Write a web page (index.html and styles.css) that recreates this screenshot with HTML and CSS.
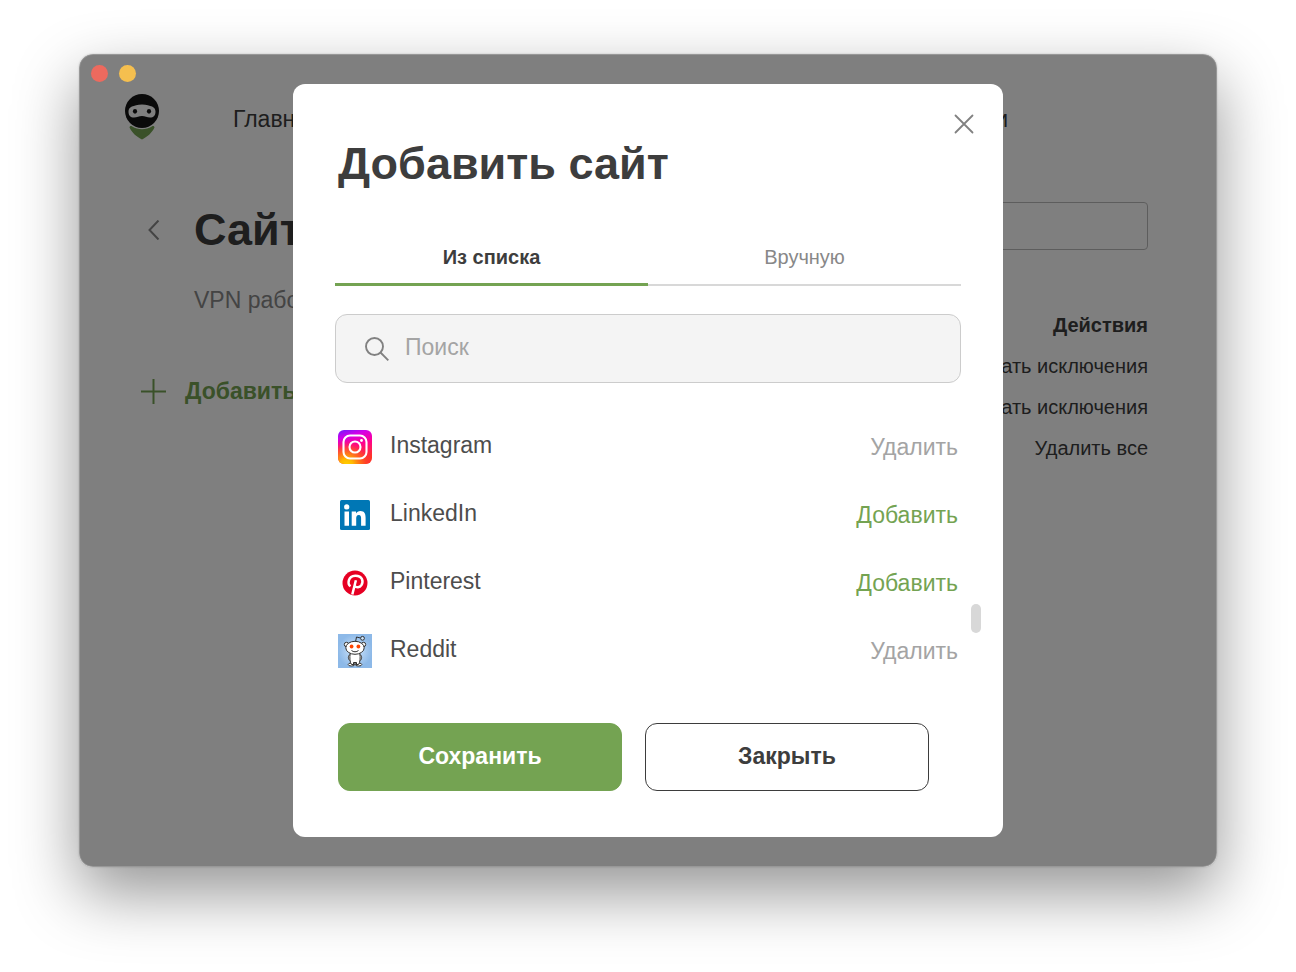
FILE: index.html
```html
<!DOCTYPE html>
<html lang="ru">
<head>
<meta charset="utf-8">
<meta name="viewport" content="width=device-width, initial-scale=1">
<title>Добавить сайт</title>
<link rel="stylesheet" href="styles.css">
</head>
<body>
<div class="window">
  <div class="app">
    <header class="topbar">
      <svg class="logo" viewBox="0 0 34 46" aria-hidden="true">
        <circle cx="17" cy="17" r="17" fill="#141414"/>
        <path d="M3.500 17.500C3.500 13 8 11.300 17 10.500C26 11.300 30.500 13 30.500 17.500C30.500 21.500 28.500 23.500 25 23.500C22 23.500 20 22 17 22S12 23.500 9 23.500C5.500 23.500 3.500 21.500 3.500 17.500Z" fill="#fff"/>
        <ellipse cx="10" cy="17.300" rx="2.100" ry="2.400" fill="#141414"/>
        <ellipse cx="24" cy="17.300" rx="2.100" ry="2.400" fill="#141414"/>
        <path d="M4.500 33.500C4.800 32 6 31.700 7.200 32.500C13 36 21 36 26.800 32.500C28 31.700 29.200 32 29.500 33.500C27 39 22 43 17 45.500C12 43 7 39 4.500 33.500Z" fill="#74a352"/>
      </svg>
      <nav class="nav">
        <a href="#home">Главная</a>
        <a href="#settings">Настройки</a>
      </nav>
    </header>
    <main class="page">
      <div class="page-head">
        <button class="back" type="button" aria-label="Назад">
          <svg width="12" height="20" viewBox="0 0 12 20"><path d="M10.500 0.500L1.500 10L10.500 19.500" fill="none" stroke="#888" stroke-width="2"/></svg>
        </button>
        <h1>Сайты</h1>
        <input class="page-search" type="text" aria-label="Поиск по сайтам">
      </div>
      <p class="page-note">VPN работает</p>
      <div class="page-body">
        <button class="add" type="button">
          <svg width="25" height="25" viewBox="0 0 25 25"><path d="M12.500 0V25M0 12.500H25" stroke="#74a352" stroke-width="2"/></svg>
          Добавить сайт
        </button>
        <section class="actions">
          <h2>Действия</h2>
          <button type="button">Импортировать исключения</button>
          <button type="button">Экспортировать исключения</button>
          <button type="button">Удалить все</button>
        </section>
      </div>
    </main>
  </div>
  <div class="overlay">
    <section class="modal" role="dialog" aria-modal="true" aria-labelledby="dialog-title">
      <header class="modal-head">
        <h2 id="dialog-title">Добавить сайт</h2>
        <button class="close" type="button" aria-label="Закрыть окно">
          <svg width="20" height="20" viewBox="0 0 20 20"><path d="M1.500 1.500L18.500 18.500M18.500 1.500L1.500 18.500" stroke="#818181" stroke-width="1.800" stroke-linecap="round"/></svg>
        </button>
      </header>
      <div class="tabs" role="tablist">
        <button class="tab tab-active" type="button" role="tab" aria-selected="true">Из списка</button>
        <button class="tab" type="button" role="tab" aria-selected="false">Вручную</button>
      </div>
      <label class="search">
        <svg width="24" height="24" viewBox="0 0 24 24"><circle cx="9.500" cy="9.500" r="8.500" fill="none" stroke="#818181" stroke-width="1.900"/><path d="M15.500 15.500L23.300 23.300" stroke="#818181" stroke-width="1.900"/></svg>
        <input type="text" placeholder="Поиск" aria-label="Поиск">
      </label>
      <div class="list-wrap">
        <ul class="list">
          <li class="row">
            <svg class="site-icon" viewBox="0 0 34 34">
              <defs>
                <linearGradient id="ig-base" x1="0" y1="0" x2="0.300" y2="1"><stop offset="0" stop-color="#6b1cff"/><stop offset="0.250" stop-color="#d400e8"/><stop offset="0.550" stop-color="#ff0090"/><stop offset="1" stop-color="#ff3a20"/></linearGradient>
                <radialGradient id="ig-warm" cx="0.250" cy="1.050" r="0.800"><stop offset="0" stop-color="#ffd600"/><stop offset="0.250" stop-color="#ffb800"/><stop offset="0.650" stop-color="#ff5a20" stop-opacity="0.700"/><stop offset="1" stop-color="#ff0069" stop-opacity="0"/></radialGradient>
              </defs>
              <rect width="34" height="34" rx="6" fill="url(#ig-base)"/>
              <rect width="34" height="34" rx="6" fill="url(#ig-warm)"/>
              <rect x="5.500" y="5.500" width="23" height="23" rx="6.500" fill="none" stroke="#fff" stroke-width="2.100"/>
              <circle cx="17" cy="17" r="5.500" fill="none" stroke="#fff" stroke-width="2.100"/>
              <circle cx="23.500" cy="10.500" r="1.400" fill="#fff"/>
            </svg>
            <span class="site-name">Instagram</span>
            <button class="row-action muted" type="button">Удалить</button>
          </li>
          <li class="row">
            <svg class="site-icon" viewBox="0 0 34 34">
              <rect x="2" y="2" width="30" height="30" rx="1.500" fill="#0077b5"/>
              <circle cx="8.700" cy="8.900" r="2.600" fill="#fff"/>
              <path d="M6.500 13.400H11V27.700H6.500ZM13.700 13.400H18V15.400C18.800 14 20.400 13 22.400 13C26.500 13 27.600 15.800 27.600 19.700V27.700H23.100V20.700C23.100 18.800 22.900 17 20.800 17S18.200 18.700 18.200 20.600V27.700H13.700Z" fill="#fff"/>
            </svg>
            <span class="site-name">LinkedIn</span>
            <button class="row-action" type="button">Добавить</button>
          </li>
          <li class="row">
            <svg class="site-icon" viewBox="0 0 34 34">
              <circle cx="17" cy="17" r="12.500" fill="#e60023"/>
              <path d="M12.500 20.200C9.300 18.300 9.700 10.200 17.300 9.800C24.500 9.700 25.700 15.300 23.400 19.200C21.700 21.900 18.200 21.900 16.800 19.900M17.900 14.200L14.300 28.500" fill="none" stroke="#fff" stroke-width="2.500" stroke-linejoin="round"/>
            </svg>
            <span class="site-name">Pinterest</span>
            <button class="row-action" type="button">Добавить</button>
          </li>
          <li class="row">
            <svg class="site-icon" viewBox="0 0 34 34">
              <defs><radialGradient id="rd-bg"><stop offset="0" stop-color="#d0e5fa"/><stop offset="1" stop-color="#8db9e8"/></radialGradient></defs>
              <rect width="34" height="34" fill="url(#rd-bg)"/>
              <g fill="#fff" stroke="#303030" stroke-width="1">
                <path d="M17.500 8L18.500 3L22.500 4" fill="none"/>
                <circle cx="24.500" cy="4.300" r="1.900" fill="#d0e5fa"/>
                <circle cx="8.500" cy="10.500" r="2.200"/><circle cx="25.500" cy="10.500" r="2.200"/>
                <ellipse cx="13.500" cy="30.500" rx="3.300" ry="1.500"/><ellipse cx="20.500" cy="30.500" rx="3.300" ry="1.500"/>
                <path d="M12.500 20C9.500 22 9.800 25.500 12.500 27M21.500 20C24.500 22 24.200 25.500 21.500 27"/>
                <path d="M12.300 19H21.700C22.700 24 22 28.500 20.500 30.500H13.500C12 28.500 11.300 24 12.300 19Z"/>
                <path d="M15.500 30.500V28.500H18.500V30.500" fill="#777"/>
                <ellipse cx="17" cy="13.800" rx="9.200" ry="6.500"/>
                <path d="M13.500 16.500C15.500 18.200 18.500 18.200 20.500 16.500" fill="none"/>
              </g>
              <circle cx="13.600" cy="12.500" r="1.900" fill="#ff4500"/><circle cx="20.400" cy="12.500" r="1.900" fill="#ff4500"/>
            </svg>
            <span class="site-name">Reddit</span>
            <button class="row-action muted" type="button">Удалить</button>
          </li>
        </ul>
        <span class="thumb" aria-hidden="true"></span>
      </div>
      <footer class="modal-foot">
        <button class="btn btn-primary" type="button">Сохранить</button>
        <button class="btn" type="button">Закрыть</button>
      </footer>
    </section>
  </div>
  <div class="lights">
    <button class="light light-red" type="button" aria-label="Закрыть"></button>
    <button class="light light-yellow" type="button" aria-label="Свернуть"></button>
  </div>
</div>
</body>
</html>
```

FILE: styles.css
```css
* {
  box-sizing: border-box;
}

body {
  margin: 0;
  padding: 54px 79px 105px;
  background: #fff;
  color: #3d3d3d;
  font-family: "Liberation Sans", Arial, sans-serif;
  font-size: 23px;
  line-height: 28px;
}

h1, h2, p, ul {
  margin: 0;
  padding: 0;
}

button {
  padding: 0;
  border: 0;
  background: none;
  color: inherit;
  font: inherit;
  cursor: pointer;
}

a {
  color: inherit;
  text-decoration: none;
}

svg {
  display: block;
  flex: none;
}

.window {
  display: grid;
  grid-template-columns: minmax(0, 1fr);
  border-radius: 14px;
  background: #fff;
  overflow: hidden;
  box-shadow: 0 26px 64px rgba(0, 0, 0, 0.42), 0 0 2px rgba(0, 0, 0, 0.2);
}

.app, .overlay, .lights {
  grid-area: 1 / 1;
}

.app {
  padding: 40px 69px 40px 46px;
}

.topbar {
  display: flex;
  align-items: center;
  gap: 74px;
}

.logo {
  width: 34px;
  height: 46px;
}

.nav {
  display: flex;
  flex: 1;
  justify-content: space-between;
  margin-right: 140px;
  padding-top: 3px;
}

.page {
  padding-top: 62px;
}

.page-head {
  display: flex;
  align-items: flex-start;
}

.back {
  width: 46px;
  height: 56px;
  margin-left: 23px;
}

.page-head h1 {
  flex: 1;
  font-size: 45px;
  line-height: 56px;
}

.page-search {
  width: 300px;
  height: 48px;
  border: 1px solid #bbb;
  border-radius: 4px;
  background: #fff;
  font: inherit;
}

.page-note {
  margin: 28px 0 0 69px;
  color: #888;
}

.page-body {
  display: flex;
  justify-content: space-between;
  align-items: flex-start;
  margin: -9px 0 0 16px;
}

.add {
  display: flex;
  align-items: center;
  gap: 19px;
  margin-top: 72px;
  color: #74a352;
  font-weight: bold;
}

.actions {
  display: flex;
  flex-direction: column;
  align-items: flex-end;
  font-size: 20px;
  line-height: 41px;
}

.actions h2 {
  font-size: 20px;
}

.overlay {
  display: flex;
  justify-content: center;
  align-items: center;
  padding: 30px;
  border-radius: 14px;
  background: rgba(0, 0, 0, 0.5);
  box-shadow: inset 0 0 0 1px rgba(255, 255, 255, 0.2);
}

.modal {
  width: 100%;
  max-width: 710px;
  padding: 0 42px 46px;
  border-radius: 12px;
  background: #fff;
}

.modal-head {
  display: flex;
  justify-content: space-between;
  align-items: flex-start;
  padding-left: 3px;
}

.modal-head h2 {
  margin-top: 52px;
  font-size: 45px;
  line-height: 56px;
}

.close {
  display: grid;
  place-items: center;
  width: 40px;
  height: 40px;
  margin: 20px -23px 0 0;
}

.tabs {
  display: flex;
  margin-top: 38px;
}

.tab {
  flex: 1;
  height: 56px;
  border-bottom: 2px solid #d8d8d8;
  color: #888;
  font-size: 20px;
}

.tab-active {
  border-bottom: 3px solid #74a352;
  color: #3d3d3d;
  font-weight: bold;
}

.search {
  display: flex;
  align-items: center;
  gap: 16px;
  height: 69px;
  margin-top: 28px;
  padding: 0 29px;
  border: 1px solid #ccc;
  border-radius: 12px;
  background: #f4f4f4;
}

.search input {
  flex: 1;
  min-width: 0;
  padding: 0 0 4px;
  border: 0;
  outline: 0;
  background: none;
  color: inherit;
  font: inherit;
}

.search input::placeholder {
  color: #a4a4a4;
  opacity: 1;
}

.list-wrap {
  position: relative;
  margin-top: 30px;
}

.list {
  padding: 0 3px;
  list-style: none;
}

.row {
  display: flex;
  align-items: center;
  gap: 18px;
  height: 68px;
}

.site-icon {
  width: 34px;
  height: 34px;
}

.site-name {
  flex: 1;
  padding-bottom: 4px;
  color: #4d4d4d;
}

.row-action {
  color: #74a352;
}

.muted {
  color: #a4a4a4;
}

.thumb {
  position: absolute;
  top: 191px;
  right: -20px;
  width: 10px;
  height: 29px;
  border-radius: 5px;
  background: #d8d8d8;
}

.modal-foot {
  display: flex;
  gap: 23px;
  margin: 38px 32px 0 3px;
}

.btn {
  flex: 1;
  height: 68px;
  padding-bottom: 2px;
  border: 1px solid #3d3d3d;
  border-radius: 12px;
  font-weight: bold;
}

.btn-primary {
  border-color: #74a352;
  background: #74a352;
  color: #fff;
}

.lights {
  display: flex;
  place-self: start;
  gap: 11px;
  padding: 11px 12px;
}

.light {
  width: 17px;
  height: 17px;
  border-radius: 50%;
}

.light-red {
  background: #ed6a5e;
}

.light-yellow {
  background: #f5bf4f;
}
```
